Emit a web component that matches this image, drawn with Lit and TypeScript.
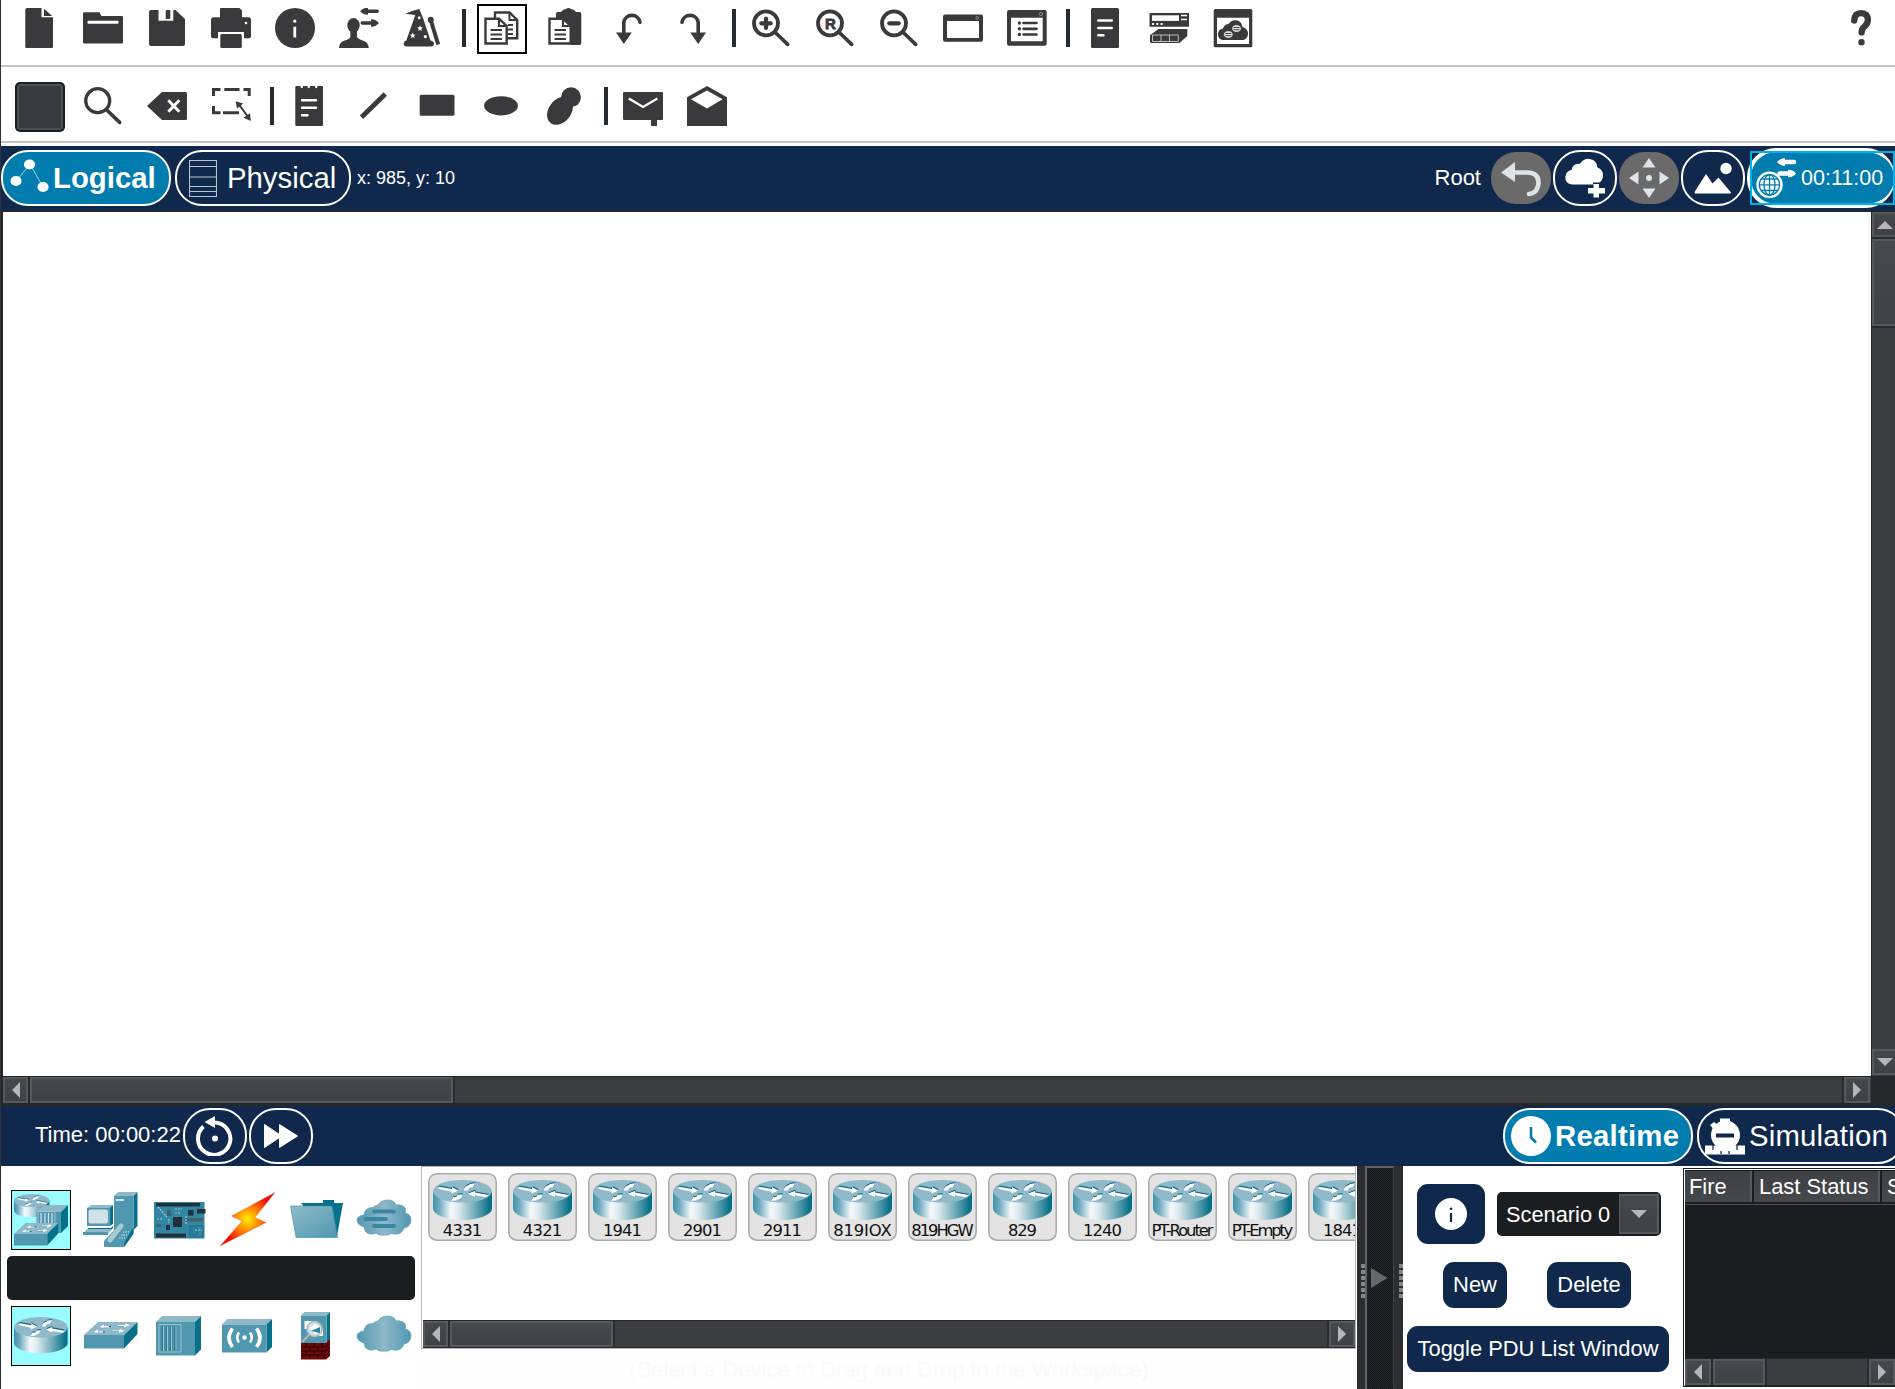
import { LitElement, html, svg, css } from "lit";
import { customElement } from "lit/decorators.js";

const K = "#3a3a3c";

const copyFront = svg`<path d="M4.5 10.7H18L25.7 18V35.5H4.5Z" fill="#fff" stroke=${K} stroke-width="2.4"/><path d="M18 10.7V18H25.7" fill="none" stroke=${K} stroke-width="2.2"/><path d="M9.5 22H21M9.5 26.5H21M9.5 31H21" stroke=${K} stroke-width="2"/>`;
const lens = (cx: number, cy: number, inner: unknown, w = 3.8) => svg`<circle cx=${cx} cy=${cy} r="12" fill="none" stroke=${K} stroke-width=${w}/><path d="M23.5 23.7L36.7 36.4" stroke=${K} stroke-width="3.6" stroke-linecap="round"/>${inner}`;

const icons: Record<string, unknown> = {
  file: svg`<path d="M8 0H22.5V9.3H34V39Q34 40 33 40H7.5Q6.3 40 6.3 39V1.5Q6.3 0 8 0Z"/><path d="M25 .8L33.2 8H25Z"/>`,
  folder: svg`<path d="M1 4.3H16.5L18.5 8H39Q40 8 40 9V34.5Q40 35.6 39 35.6H1Q0 35.6 0 34.5V5.3Q0 4.3 1 4.3Z"/><rect x="4.5" y="12.7" width="31" height="3" rx="1" fill="#fff"/>`,
  save: svg`<path d="M4 2H28.5L38 11V36Q38 38 36 38H4Q2 38 2 36V4Q2 2 4 2Z"/><path d="M11.5 1.5V12.7H26.3V1.5Z" fill="#fff"/><rect x="18.7" y="2" width="4.6" height="9" rx="1"/>`,
  print: svg`<path d="M10 0H28.5L31 2.5V9.3H37.5Q40 9.3 40 11.5V28.5Q40 30.3 38 30.3H33V24H7V30.3H2Q0 30.3 0 28.5V11.5Q0 9.3 2.5 9.3H9V1Q9 0 10 0Z"/><rect x="9.3" y="26" width="21.5" height="14" rx="1.5"/><circle cx="35" cy="15" r="1.3" fill="#fff"/>`,
  info: svg`<circle cx="20" cy="20" r="20"/><circle cx="19.8" cy="13.2" r="1.6" fill="#fff"/><path d="M19.8 18.7V29.5" stroke="#fff" stroke-width="2.8"/>`,
  user: svg`<ellipse cx="14.5" cy="17.3" rx="6.2" ry="7.2"/><path d="M11.3 22H18V29Q19 31 25 33Q29.3 34.5 29.7 40H0Q.2 34.5 5 32.8Q11 31 11.3 29Z"/><path d="M24 3.3H38.2M23.3 15H37" stroke=${K} stroke-width="3.6" stroke-linecap="round"/><path d="M21 3.3Q25 -1 29 0V6.600Q25 7.5 21 3.300ZM40 15Q36 10.500 32 11.500V18.500Q36 19.500 40 15Z"/>`,
  wizard: svg`<path d="M2.3 5.8Q9 2.5 16.3 1L20 10L27.5 32.5Q31.5 33.5 31 36Q30.8 38.4 28.5 38.4H3.5Q.7 38.4 .7 35.5Q.8 33 3.3 32.5L12.3 7Z"/><path d="M27.7 12L35.2 36.5" stroke=${K} stroke-width="4"/><circle cx="27.7" cy="11.8" r="3"/><g fill="#fff"><path d="M17 17.3l.8 2 2.2.1-1.7 1.4.6 2.1-1.9-1.2-1.8 1.2.6-2.1-1.8-1.4 2.2-.1z"/><path d="M9.7 24.6l.8 2 2.2.1-1.7 1.4.6 2.1-1.9-1.2-1.8 1.2.6-2.1-1.8-1.4 2.2-.1z"/><circle cx="22.4" cy="28.6" r="1.6"/><circle cx="16.2" cy="9.8" r="1.5"/></g>`,
  copy: svg`<path d="M14 15V4.5H28.5L36.2 12V30.3H24" fill="#fff" stroke=${K} stroke-width="2.4"/><path d="M28.5 4.5V12H36.2" fill="none" stroke=${K} stroke-width="2"/><path d="M27 17H32M27 21.5H32M27 26H32" stroke=${K} stroke-width="2"/>${copyFront}`,
  paste: svg`<path d="M12.5 4H16Q18 1 21 1Q23.5-.8 26 1Q29 1 31 4H34.5Q36.3 4 36.3 6V35Q36.3 37 34.5 37H26V19L18 12L11 11V6Q11 4 12.5 4Z"/>${copyFront}`,
  undo: svg`<path d="M14.8 25V14.3A8.2 8.2 0 0 1 31 14.3" fill="none" stroke=${K} stroke-width="3.6" stroke-linecap="round"/><path d="M7 24.4H22.8L14.8 36Z"/>`,
  redo: svg`<path d="M25.2 25V14.3A8.2 8.2 0 0 0 9 14.3" fill="none" stroke=${K} stroke-width="3.6" stroke-linecap="round"/><path d="M33 24.4H17.2L25.2 36Z"/>`,
  zoomIn: lens(15, 15.3, svg`<path d="M10.3 15.3H19.7M15 10.600V20" stroke=${K} stroke-width="4.200" stroke-linecap="round"/>`),
  zoomReset: lens(15, 15.3, svg`<text x="15.3" y="21" text-anchor="middle" class="rtext">R</text>`),
  zoomOut: lens(15, 15.3, svg`<path d="M10.300 15.3H19.700" stroke=${K} stroke-width="4.200" stroke-linecap="round"/>`),
  window: svg`<path fill-rule="evenodd" d="M2 6.5H38Q40 6.5 40 8.5V31.7Q40 33.7 38 33.7H2Q0 33.7 0 31.7V8.5Q0 6.5 2 6.5ZM4 13V30H36V13Z"/><circle cx="34.2" cy="9.8" r="1.4" fill="none" stroke="#aaa" stroke-width=".7"/>`,
  list: svg`<path fill-rule="evenodd" d="M2 1.9H37.7Q39.7 1.9 39.7 3.9V35.7Q39.7 37.7 37.7 37.7H2Q0 37.7 0 35.7V3.9Q0 1.9 2 1.9ZM4 9.8V33.3H35.7V9.8Z"/><circle cx="34" cy="6" r="1.6" fill="none" stroke="#aaa" stroke-width=".7"/><path d="M16.5 15H29.5M16.5 20.8H29.5M16.5 26.5H29.5" stroke=${K} stroke-width="2.7" stroke-linecap="round"/><circle cx="12.4" cy="15" r="1.7"/><circle cx="12.4" cy="20.8" r="1.7"/><circle cx="12.4" cy="26.5" r="1.7"/>`,
  doc: svg`<rect x="6" width="28" height="40" rx="1.5"/><path d="M13.2 12.5H26.8M13.2 20H26.8M13.2 27.3H18.5" stroke="#fff" stroke-width="2.4" stroke-linecap="round"/>`,
  server: svg`<path d="M.5 5H40V18.8H.5Z"/><path d="M3 7.3H30V12.9H3Z" fill="#fff"/><path d="M32 7.6H38M32 11.6H38" stroke="#fff" stroke-width="1.5"/><path d="M3 15.9h2M7.3 15.9h2M11.6 15.9h2" stroke="#fff" stroke-width="2"/><path d="M9.5 21H38.3V28L30.5 35H2L1 34V27.2Z"/><path d="M3.5 27H29.3V33.5H3.5ZM12 27V33.5M20.5 27V33.5" fill="none" stroke="#ccc" stroke-width=".9"/>`,
  cloudWin: svg`<path fill-rule="evenodd" d="M2.2 1H37.8Q39.3 1 39.3 2.5V37.8Q39.3 39.3 37.8 39.3H2.2Q.7 39.3 .7 37.8V2.5Q.7 1 2.2 1ZM4 9.7V36H36V9.7Z"/><path d="M9.5 32Q4.8 31 4.9 26Q5.2 21.3 10 20.5Q11.5 16 15.5 16Q18 12 22.5 12.2Q28.5 12.5 29.5 19Q35 20.5 35 26Q34.8 30.5 30.5 32Z"/><g fill="#ddd" stroke="#ddd"><ellipse cx="23.5" cy="20.5" rx="4" ry="3"/><ellipse cx="15.3" cy="26.5" rx="4" ry="3"/></g><path d="M20.5 19.5h6M20.5 21.7h6M12.3 25.5h6M12.3 27.7h6" stroke=${K} stroke-width=".9"/>`,
  help: svg`<path d="M13.2 12.5Q13.6 5.2 20 5.2Q26.8 5.3 26.9 12Q26.7 16 23.5 18.4Q20.6 20.5 20.6 24.4" fill="none" stroke=${K} stroke-width="6.3" stroke-linecap="round"/><circle cx="20.5" cy="34.2" r="3.2"/>`,
  search: lens(14.7, 14.7, "", 3.3),
  del: svg`<path d="M0 20L15 6H38.5Q40 6 40 7.5V32.5Q40 34 38.5 34H15Z"/><path d="M21.3 14.3L32.3 25.7M32.3 14.3L21.3 25.7" stroke="#fff" stroke-width="2.9"/>`,
  select: svg`<g fill="none" stroke=${K} stroke-width="3"><path d="M2.5 10V3.6H9.5M13.3 3.6H28.5M32.5 3.6H38.2V10M2.5 20V26.8H9.5M12 26.8H28"/><path d="M28 18.7L37.5 31.5" stroke-width="2"/></g><path d="M24.6 15.3L32.3 17.5L26 22.5ZM39.8 35L39 27.2L32.6 31.7Z"/>`,
  note: svg`<path d="M7.3 0H11.500Q11.500 2.3 12.700 2.3Q14 2.3 14 0H18.500Q18.500 2.3 19.7 2.3Q21 2.3 21 0H26Q26 2.3 27.3 2.3Q28.500 2.3 28.500 0H33Q34 0 34 1V39Q34 40 33 40H7.3Q6.3 40 6.3 39V1Q6.3 0 7.3 0Z"/><path d="M13 14.2H27M13 21.7H27M13 29.2H18.5" stroke="#fff" stroke-width="2.4" stroke-linecap="round"/>`,
  line: svg`<path d="M8.5 31.3L32.3 8" stroke=${K} stroke-width="4.8"/>`,
  rect: svg`<rect x="2.7" y="8.8" width="34.8" height="21" rx="1.5"/>`,
  ellipse: svg`<ellipse cx="20" cy="19.8" rx="16.9" ry="9.6"/>`,
  blob: svg`<circle cx="26" cy="11.2" r="9.9"/><ellipse cx="15" cy="24.8" rx="15.4" ry="11.2" transform="rotate(-52 15 24.8)"/>`,
  mail: svg`<path d="M1.2 6H38.8Q40 6 40 7.2V32.8Q40 34 38.8 34H34V40H28V34H1.2Q0 34 0 32.8V7.2Q0 6 1.2 6Z"/><path d="M5.8 12.5L20 21L34.4 12.5" fill="none" stroke="#fff" stroke-width="2.3"/>`,
  openMail: svg`<path d="M0 11.2L20 0L40 11.2V40H0Z"/><path d="M4 13.3L20 4.4L35.5 13.3L20 22.6Z" fill="#fff"/>`,
};

const ic = (n: string) => html`<svg class="ic" viewBox="0 0 40 40" width="40" height="40" fill=${K}>${icons[n]}</svg>`;

const routerArrows = svg`<path d="M4.500 8.800L6.500 6.800L19 9V7.200L25.500 10.500L18.500 13.600V11.800Z"/><path d="M31 10.500Q31 5.500 36.500 5L36 4.200L41.800 3.300L39 8L38.300 7.200Q35.200 7.500 35 10.500Z"/><path d="M55.500 15L53.500 17.300L42 15.300V17L35 13.600L42 11V12.600Z"/><path d="M18 20.800L20.500 16.800L21.300 17.600Q24.500 17 24.800 14.800L29.500 14.500Q28.500 19 23.200 19.800L24 20.600Z"/>`;
/* router cylinder with arrows on its top face, in a 59x40 box */
const routerBody = (id: string) => svg`
  <defs><linearGradient id=${id}><stop offset="0" stop-color="#3f92ad"/><stop offset=".1" stop-color="#6aa9bf"/><stop offset=".3" stop-color="#f4f9fa"/><stop offset=".42" stop-color="#dfecef"/><stop offset=".75" stop-color="#62a2b3"/><stop offset=".95" stop-color="#0b728c"/></linearGradient></defs>
  <path d="M0 11.5V28.5A29.5 11.3 0 0 0 59 28.5V11.5Z" fill="url(#${id})"/>
  <ellipse cx="29.5" cy="11.3" rx="29.5" ry="11.3" fill="#8fb8c9"/>
  <g fill="#0b6a84" transform="translate(.3 -1.2)">${routerArrows}</g><g fill="#fff">${routerArrows}</g>`;

const box3d = (x: number, y: number, w: number, h: number, d: number) => svg`
  <path d="M${x} ${y + d}L${x + d} ${y}H${x + w}L${x + w - d} ${y + d}Z" fill="#8fb8c9"/>
  <path d="M${x + w - d} ${y + d}L${x + w} ${y}V${y + h - d}L${x + w - d} ${y + h}Z" fill="#07708a"/>
  <path d="M${x} ${y + d}H${x + w - d}V${y + h}H${x}Z" fill="#5097b0"/>`;

const slab = svg`<path d="M0 13L14 0H53.5L40 13Z" fill="#8fb8c9"/><path d="M40 13L53.5 0V12L40 26.5Z" fill="#07708a"/><path d="M0 13H40V26.5H0Z" fill="#5097b0"/>
  <g fill="none" stroke="#0b6a84" stroke-width="1.2"><path d="M18 4.5H27M34 4H43M12 10H21M28 9.5H37"/></g><g fill="#fff"><path d="M20 2.5L15.5 5L19.5 6V5.2H25V4H20ZM42 1.5L46 3.2L40 5.5V4.2H34V3H41ZM14 7.5L9.5 10L13.5 11V10.4H19V9.2H14ZM36 7L40.5 8.8L35 11V9.6H28V8.5H35Z"/></g>`;
const cloudShape = svg`<path d="M7 15Q8 7 16 7.5Q18 5 21 5Q24 0 31 0Q37 0 39 5Q46 4 48.5 9Q48.500 12 48 13Q54 14 54 20Q53.500 27 47 28Q45 35 37 34L34 33.500Q31 36 27 35Q22 36 19 33Q12 36 8 31Q8 29 7 27Q0 25 0 20Q0 16 7 15Z" fill="url(#cl)" stroke="#6ba4b8" stroke-width=".8"/>`;
const clGrad = svg`<defs><linearGradient id="cl"><stop offset="0" stop-color="#5097b0"/><stop offset=".5" stop-color="#8fb8c9"/><stop offset="1" stop-color="#5097b0"/></linearGradient></defs>`;

/* every device picture uses a 60x60 box */
const devices: Record<string, unknown> = {
  network: svg`<g transform="translate(3 4) scale(.6 .58)">${routerBody("rg1")}</g>${box3d(25.5, 15, 31.5, 28, 7)}<path d="M27 21.500H44V36H27Z" fill="none" stroke="#9cc2d0"/><path d="M30 23V36M34 23V36M37.500 23V36M41 23V36" stroke="#cfe2e9" stroke-width="1.200"/><g transform="translate(3 33) scale(.83 .85)">${slab}</g>`,
  pc: svg`${box3d(33, 2, 23.5, 38, 4)}<path d="M34.500 9H43V11H34.500Z" fill="#cfe2e9"/><path d="M6 18L10 15H32L28.500 18Z" fill="#8fb8c9"/><path d="M28.500 18L32 15V34L28.500 36Z" fill="#07708a"/><path d="M6 18H28.500V36H6Z" fill="#5097b0"/><rect x="7.500" y="19.500" width="19.500" height="14" rx="2" fill="#cfe2e9"/><path d="M7 38H30L32 36V38L29 41H8Z" fill="#07708a"/><path d="M6 39L2 44H27L31 39Z" fill="#8fb8c9"/><path d="M2 42H27V45H2Z" fill="#5097b0"/><path d="M23 51L36 37H52.500V43L43 57H23Z" fill="#5097b0"/><path d="M43 53L52.500 37V44L43 57Z" fill="#07708a"/><path d="M29 50L40 36" stroke="#a9c9d5" stroke-width="5" stroke-linecap="round"/><path d="M38 48H44M40 45H46M42 42H48" stroke="#cfe2e9" stroke-dasharray="1.500 1"/>`,
  board: svg`<path d="M4 12H54.500V48.500H4Z" fill="#3186a4"/><path d="M6 13H50V16.500H6ZM6 43.500H36V47.500H6ZM23 27H32V37H23ZM38 20H43.500V25.500H38ZM16 35H20V40H16ZM47 19H55.500V23.500H47Z" fill="#22303a"/><path d="M35 28H53V31.500H35ZM17 20H21V26H17ZM6 34H11V37H6Z" fill="#45606c"/><path d="M40 36H53V47H40ZM42 38H47V45H42Z" fill="none" stroke="#1b6a86"/><path d="M8 17L17 27M25 19H32M25 23H30M7 29H13M19 29V33M36 26V35M45 40H52" stroke="#9cc8d8" stroke-width="1.200" stroke-dasharray="2 1"/>`,
  bolt: svg`<defs><radialGradient id="bo" cx=".5" cy=".5" r=".5"><stop offset="0" stop-color="#ffee00"/><stop offset=".5" stop-color="#ff7a00"/><stop offset="1" stop-color="#f00808"/></radialGradient></defs><path d="M58 2.500L14.500 26L25 31L3 56L49 32.500L38 27.500Z" fill="url(#bo)" stroke="#e86a60" stroke-width=".4"/>`,
  folder: svg`<path d="M15 13H37V10H48V13H57L51 46H40Z" fill="#07708a"/><defs><linearGradient id="fo" x2="1" y2="1"><stop offset="0" stop-color="#8fbccb"/><stop offset="1" stop-color="#4f98b0"/></linearGradient></defs><path d="M4.500 16H46L51.500 47.500H10Z" fill="url(#fo)" stroke="#3c8ca6" stroke-width=".6"/>`,
  multi: svg`${clGrad}<g transform="translate(3 10)">${cloudShape}<path d="M17 11.500H37M8.500 19H29M17 26H37" stroke="#3a86a0" stroke-width="4" stroke-linecap="round"/></g>`,
  router: svg`<g transform="translate(3 11) scale(.91 .91)">${routerBody("rg2")}</g>`,
  switch: svg`<g transform="translate(3 16)">${slab}</g>`,
  hub: svg`${box3d(6, 10, 45, 39.5, 6)}<path d="M9 18.500H31V46H9Z" fill="none" stroke="#9cc2d0"/><path d="M13 20V45M17 20V45M21 20V45M25.500 20V45" stroke="#28748d" stroke-width="2.600"/><path d="M13.500 20V45M17.500 20V45M21.500 20V45M26 20V45" stroke="#9cc2d0" stroke-width="1.200"/>`,
  wireless: svg`${box3d(5, 13, 50, 33.5, 5.5)}<circle cx="27.500" cy="31.500" r="2.200" fill="#fff"/><g fill="none" stroke="#fff" stroke-width="2.600"><path d="M22 26.500Q18.500 31.500 22 36.500M33 26.500Q36.500 31.500 33 36.500"/><path d="M15.500 22.500Q8.500 31.500 15.500 41M39.500 22.500Q46.500 31.500 39.500 41" stroke-width="3.600"/></g>`,
  security: svg`${box3d(15, 6, 29, 35, 3.5)}<path d="M15 37H40L44 33V50L40 53.500H15Z" fill="#6b0808"/><path d="M15 41H40L44 37M15 45H40L44 41M15 49H40L44 45M20 37V41M28 37V41M36 37V41M24 41V45M32 41V45M20 45V49M28 45V49M36 45V49M24 49V53M32 49V53" fill="none" stroke="#2d0303"/><path d="M18.500 15H29V23H18.500ZM25 24H37V30H25Z" fill="#fff"/><circle cx="28.500" cy="23" r="7.500" fill="#cfe2e9" stroke="#b8b8b8" stroke-width="1.600"/><path d="M23 22L29 18L35 22L29 28Z" fill="#fff"/><path d="M34 21L25 25L34 27Z" fill="#2f86a2"/><path d="M23 29L16 36" stroke="#bdb3ae" stroke-width="2.200"/>`,
  wan: svg`<g transform="translate(3 10)">${cloudShape}</g>`,
};
const dev = (n: string, sel = false) => html`<div class=${sel ? "dev sel" : "dev"}><svg viewBox="0 0 60 60" width="60" height="60">${devices[n]}</svg></div>`;

const models: [string, number][] = [["4331", 39.5], ["4321", 39.5], ["1941", 39], ["2901", 39], ["2911", 39], ["819IOX", 58.5], ["819HGW", 62.5], ["829", 29], ["1240", 39], ["PT-Router", 62], ["PT-Empty", 61.5], ["1841", 39]];

const tri = (dir: string) => {
  const d: Record<string, string> = { left: "M16 4V20L8 12Z", right: "M8 4V20L16 12Z", up: "M4 16H20L12 8Z", down: "M4 8H20L12 16Z" };
  return html`<svg width="24" height="24" viewBox="0 0 24 24"><path d=${d[dir]} fill="#b4b6b8"/></svg>`;
};

@customElement("app-root")
export class AppRoot extends LitElement {
  static styles = css`
    :host { display: block; width: 1895px; height: 1389px; overflow: hidden; background: #fff; color: #fff; font: 22px "Liberation Sans", Arial, sans-serif; }
    * { box-sizing: border-box; }
    svg { display: block; flex: none; }
    .app { display: flex; flex-direction: column; height: 1389px; border-left: 1px solid #2f323b; white-space: nowrap; }
    .tools { display: flex; padding-left: 6px; border-bottom: 2px solid #c3c3c3; flex: none; }
    .t1 { height: 67px; } .t2 { height: 76px; margin-bottom: 3px; }
    .cell { width: 64px; display: flex; justify-content: center; }
    .t1 .cell { height: 56px; padding-top: 8px; } .t2 .cell { padding-top: 19px; }
    .t1 .cell.copy { padding-top: 4px; }
    .copy span { width: 50px; height: 50px; margin-left: 2px; border: 2px solid #000; padding: 2px 0 0 2px; }
    .t2 .cell.picked { padding: 15px 0 0 2px; }
    .picked span { width: 50px; height: 50px; border: 2px solid #1c1f22; border-radius: 5px; background: #373a3f; box-shadow: inset 0 0 0 2px #4a4f53; padding: 3px; }
    .picked svg { opacity: .35; }
    .sep { width: 4px; height: 38px; margin: 9px 3px 0 7px; background: #262c31; }
    .t2 .sep { margin-top: 20px; }
    .grow { flex: 1; }
    .help { margin-right: 2px; }
    .rtext { font: bold 15px "Liberation Sans", sans-serif; stroke: #3a3a3c; stroke-width: .8px; }
    .bar { background: #0f284b; display: flex; flex: none; align-items: center; overflow: hidden; }
    .top { height: 64px; }
    .pill { flex: none; height: 56px; border: 2px solid #fff; border-radius: 27px; display: flex; align-items: center; font-size: 29.33px; }
    .on { background: #007cae; font-weight: bold; }
    .logical { width: 170px; padding-left: 7px; gap: 3px; }
    .physical { width: 176px; margin-left: 4px; padding-left: 12px; gap: 10px; }
    .coords { font-size: 18px; margin-left: 6px; }
    .root { margin-right: 10px; }
    .round { width: 64px; justify-content: center; margin-right: 2px; }
    .gray { width: 60px; height: 52px; background: #6a6a6a; border: 0; border-radius: 25px; margin-right: 2px; }
    .timer { position: relative; width: 148px; height: 60px; border-width: 4px 1px 4px 4px; border-radius: 29px; font-size: 21.5px; font-weight: normal; padding-left: 5px; gap: 5px; }
    .timer::after { content: ""; position: absolute; left: -1px; top: -1px; right: -1px; bottom: -1px; border: 2px solid #00b3e6; }
    .work { display: grid; grid-template-columns: 1868px 24px; grid-template-rows: 864px 28px; height: 896px; border-left: 2px solid #25282b; border-top: 2px solid #25282b; background: #25282b; flex: none; }
    .canvas { background: #fff; }
    .sb { display: flex; background: #3b3d41; border: 1px solid #25282b; border-left: 0; border-right: 0; }
    .sb.v { flex-direction: column; border: 0 solid #25282b; border-left-width: 1px; }
    .btn, .thumb { flex: none; background: linear-gradient(#45494d, #3e4145); border: 2px solid #55595d; display: flex; align-items: center; justify-content: center; overflow: hidden; }
    .btn { width: 26px; }
    .thumb { box-shadow: 2px 0 #292c2f, -2px 0 #292c2f; }
    .v .btn { width: 26px; height: 25px; } .v .thumb { width: 26px; height: 87px; box-shadow: 0 2px #292c2f, 0 -2px #292c2f; margin-top: 2px; }
    .v .btn:last-child { height: 26px; margin-bottom: 1px; }
    .h1 .thumb { width: 423px; margin-left: 2px; }
    .edge { box-shadow: -2px 0 #292c2f; margin-right: 1px; }
    .h2 .edge, .h3 .edge { margin-right: 0; }
    .h1 .btn:first-child, .h2 .btn:first-child { width: 25px; }
    .mid { height: 60px; padding-left: 34px; }
    .time { width: 148px; padding-bottom: 2px; }
    .realtime { width: 190px; padding-left: 6px; gap: 4px; margin-right: 4px; letter-spacing: .25px; }
    .sim { width: 208px; padding-left: 6px; gap: 4px; margin-right: -10px; letter-spacing: .2px; }
    .bottom { display: flex; flex: 1; min-height: 0; color: #fff; }
    .kinds { width: 420px; flex: none; padding: 24px 0 0 6px; }
    .devs { display: grid; grid-template-columns: 70px 69px 67px 68.5px 68.5px 60px; padding-left: 4px; height: 60px; }
    .dev { width: 60px; height: 60px; }
    .sel { background: #99fcff; outline: 1px solid #000; outline-offset: -1px; }
    .name { width: 408px; height: 44px; margin: 6px 0; background: #1b1e21; border-radius: 5px; }
    .models { width: 936px; flex: none; display: flex; flex-direction: column; }
    .lst { height: 183px; border: 1px solid #b9b9b9; width: 935px; display: flex; flex-direction: column; padding-left: 1px; }
    .cards { display: flex; gap: 11px; padding: 6px 0 0 5px; height: 153px; overflow: hidden; }
    .card { width: 69px; height: 68px; flex: none; }
    .card text { font: 16.4px "DejaVu Sans", Verdana, sans-serif; fill: #111; }
    .h2 { height: 28px; width: 932px; }
    .h2 .thumb { width: 163px; margin-left: 2px; }
    .hint { text-align: center; color: #fafafa; padding-top: 8px; flex: 1; background: #fefefe; }
    .split { width: 46px; flex: none; background: #2c2e33; display: flex; align-items: stretch; }
    .split .face { width: 30px; margin: 0 5px 0 0; border: 2px solid #606367; border-right: 1px solid #3d4043; border-bottom: 0; background: repeating-conic-gradient(#15181a 0 25%, #25282b 0 50%) 0 0/2px 2px; padding: 100px 0 0 4px; }
    .grip { width: 4px; height: 34px; margin: 98px 0 0 4px; background: repeating-linear-gradient(#86888a 0 4px, #2c2e33 4px 6px); }
    .face + .grip { margin-left: 0; }
    .pdu { width: 280px; flex: none; padding: 18px 0 0 4px; display: flex; flex-direction: column; align-items: flex-start; }
    .row { display: flex; align-items: center; }
    .b { background: #0f284b; border-radius: 11px; height: 46px; display: flex; align-items: center; justify-content: center; font-size: 21.9px; }
    .i { width: 68px; height: 60px; margin: 0 12px 0 10px; }
    .combo { width: 164px; height: 44px; background: #1b1e20; border: 2px solid #1b1e20; border-radius: 5px; display: flex; align-items: stretch; justify-content: space-between; line-height: 41px; padding-left: 7px; font-size: 21.8px; }
    .combo .btn { width: 40px; border-left-width: 1px; }
    .acts { margin: 18px 0 18px 36px; gap: 40px; }
    .new { width: 64px; } .delete { width: 84px; } .toggle { width: 262px; }
    .table { flex: none; width: 220px; height: 219px; margin-top: 2px; border: 1px solid #1b1e20; background: #1b1e20; box-shadow: inset 1px 1px #fff; padding: 2px 0 0 1px; display: flex; flex-direction: column; }
    .head { display: flex; height: 34px; border-bottom: 1px solid #4a4e52; line-height: 32px; font-size: 21.9px; }
    .head div { flex: none; height: 31px; background: linear-gradient(#3d4145, #45484c); border-right: 2px solid #565a5e; padding-left: 5px; margin-right: 2px; }
    .fire { width: 67px; } .head .fire { padding-left: 4px; } .last { width: 126px; } .s { width: 30px; }
    .body { flex: 1; }
    .h3 { height: 28px; width: 210px; }
    .h3 .thumb { width: 52px; margin-left: 2px; }
    .clip { overflow: hidden; flex: 1; }
  `;

  render() {
    const cells = (...n: string[]) => n.map((x) => html`<div class="cell">${ic(x)}</div>`);
    const sep = html`<div class="sep"></div>`;
    return html`<div class="app">
      <div class="tools t1">
        ${cells("file", "folder", "save", "print", "info", "user", "wizard")}${sep}
        <div class="cell copy"><span>${ic("copy")}</span></div>
        ${cells("paste", "undo", "redo")}${sep}
        ${cells("zoomIn", "zoomReset", "zoomOut", "window", "list")}${sep}
        ${cells("doc", "server", "cloudWin")}
        <div class="grow"></div><div class="cell help">${ic("help")}</div>
      </div>
      <div class="tools t2">
        <div class="cell picked"><span>${ic("select")}</span></div>
        ${cells("search", "del", "select")}${sep}${cells("note", "line", "rect", "ellipse", "blob")}${sep}${cells("mail", "openMail")}
      </div>
      <div class="bar top">
        <div class="pill on logical"><svg width="40" height="40" viewBox="0 0 40 40" fill="#fff"><path d="M6.500 23L20 6L33 29" fill="none" stroke="#9fd0e3" stroke-width="1"/><ellipse cx="19.500" cy="6.500" rx="5.600" ry="5"/><ellipse cx="6" cy="23" rx="5.600" ry="5"/><ellipse cx="33" cy="29" rx="5.600" ry="5"/></svg>Logical</div>
        <div class="pill physical"><svg width="28" height="37" viewBox="0 0 28 37"><path d="M.5.500H27.500V36.500H.500ZM.500 6.500H27.500M.500 17H27.500M.500 26.500H27.500M.500 31.500H27.500" fill="none" stroke="#b9c3d1" stroke-width="1.100"/></svg>Physical</div>
        <div class="coords">x: 985, y: 10</div>
        <div class="grow"></div>
        <div class="root">Root</div>
        <div class="pill gray round"><svg width="40" height="40" viewBox="0 0 40 40"><path d="M12 14.500H27.500Q37.500 15.500 37.500 24.500Q37 35 28 36" fill="none" stroke="#dde3e8" stroke-width="4.600" stroke-linecap="round"/><path d="M0 14.500L14 4V24Z" fill="#dde3e8"/></svg></div>
        <div class="pill round"><svg width="40" height="40" viewBox="0 0 40 40" fill="#fff"><path d="M7 26.500Q0 25.500 .3 19Q1 13 6.500 12Q8 5 15 5.800Q19 0 25 1Q32 2.500 32.500 9.500Q38 11.500 38 17.500Q38 22 34.500 24.500H28V26.500Z"/><path d="M28.500 26H34V30H40V35.500H34V39.500H28.500V35.500H23V30H28.500Z"/></svg></div>
        <div class="pill gray round"><svg width="40" height="40" viewBox="0 0 40 40" fill="#dde3e8"><circle cx="20" cy="20" r="3"/><path d="M20 0L26.500 9.500H13.500ZM20 40L26.500 30.500H13.500ZM0 20L9.500 13.500V26.500ZM40 20L30.500 13.500V26.500Z"/></svg></div>
        <div class="pill round"><svg width="40" height="40" viewBox="0 0 40 40" fill="#fff"><circle cx="33" cy="10.500" r="5.700"/><path d="M1.500 34L13 16L19.500 25.500L25.500 19.500L38 34.500L37.500 35.500H2Z"/></svg></div>
        <div class="pill on timer"><svg width="40" height="40" viewBox="0 0 40 40" fill="#fff"><path d="M25 4H38M23.500 15.500H37" stroke="#fff" stroke-width="4.400" stroke-linecap="round"/><path d="M21 4Q25 -.500 29 .300V7.800Q25 8.500 21 4ZM40 15.500Q36 11 32 12V19.200Q36 20 40 15.500Z"/><circle cx="13.500" cy="26.800" r="13.200"/><g fill="none" stroke="#007cae" stroke-width="1.300"><ellipse cx="13.500" cy="26.800" rx="5.500" ry="10.300"/><path d="M13.500 16.500V37M3.500 26.800H23.500M5 21H22M5 32.500H22"/><circle cx="13.500" cy="26.800" r="10.200"/></g></svg>00:11:00</div>
      </div>
      <div class="work">
        <div class="canvas"></div>
        <div class="sb v"><div class="btn">${tri("up")}</div><div class="thumb"></div><div class="grow"></div><div class="btn">${tri("down")}</div></div>
        <div class="sb h1"><div class="btn">${tri("left")}</div><div class="thumb"></div><div class="grow"></div><div class="btn edge">${tri("right")}</div></div>
      </div>
      <div class="bar mid">
        <div class="time">Time: 00:00:22</div>
        <div class="pill round"><svg width="40" height="40" viewBox="0 0 40 40"><path d="M8.500 10.500A16.200 16.200 0 1 0 20 6.500" fill="none" stroke="#fff" stroke-width="4"/><path d="M9.500 6L20 0V12Z" fill="#fff"/><circle cx="20" cy="22.500" r="3" fill="#fff"/></svg></div>
        <div class="pill round"><svg width="40" height="40" viewBox="0 0 40 40" fill="#fff" stroke="#fff" stroke-linejoin="round"><path d="M3.500 8.500L18.500 18.500V8.500L36.500 20L18.500 31.500V21.500L3.500 31.500Z"/></svg></div>
        <div class="grow"></div>
        <div class="pill on realtime"><svg width="40" height="40" viewBox="0 0 40 40"><circle cx="20" cy="20" r="20" fill="#fff"/><path d="M20 11V21.500L25 26.500" fill="none" stroke="#007cae" stroke-width="2.600"/></svg>Realtime</div>
        <div class="pill sim"><svg width="40" height="40" viewBox="0 0 40 40" fill="#fff"><path d="M15 2.500H25V6H15ZM0 29.500H40V38.500H0ZM5 9L9 6L13 9L9 14Z"/><circle cx="20.500" cy="19" r="14.500"/><path d="M11 17.500H29V21.500H11Z" fill="#0f284b"/><path d="M8 29V34M32 29V34M16 35V38M24 35V38" stroke="#0f284b" stroke-width="1.200"/></svg>Simulation</div>
      </div>
      <div class="bottom">
        <div class="kinds">
          <div class="devs">${dev("network", true)}${dev("pc")}${dev("board")}${dev("bolt")}${dev("folder")}${dev("multi")}</div>
          <div class="name"></div>
          <div class="devs">${dev("router", true)}${dev("switch")}${dev("hub")}${dev("wireless")}${dev("security")}${dev("wan")}</div>
        </div>
        <div class="models">
          <div class="lst">
            <div class="cards">${models.map(([m, w], i) => html`<svg class="card" width="69" height="68" viewBox="0 0 69 68"><rect x=".8" y=".8" width="67.400" height="66.400" rx="8" fill="#e4e4e4" stroke="#a9a9a9" stroke-width="1.500"/><g transform="translate(5 7)">${routerBody("c" + i)}</g><text x=${34.5 - w / 2} y="62.500" textLength=${w}>${m}</text></svg>`)}</div>
            <div class="sb h2"><div class="btn">${tri("left")}</div><div class="thumb"></div><div class="grow"></div><div class="btn edge">${tri("right")}</div></div>
          </div>
          <div class="hint">(Select a Device to Drag and Drop to the Workspace)</div>
        </div>
        <div class="split"><div class="grip"></div><div class="face"><svg width="17" height="20" viewBox="0 0 17 20"><path d="M0 0V20L16.500 10Z" fill="#66686a"/></svg></div><div class="grip"></div></div>
        <div class="pdu">
          <div class="row"><div class="b i"><svg width="32" height="32" viewBox="0 0 32 32"><circle cx="16" cy="16" r="16" fill="#fff"/><circle cx="16" cy="10.700" r="1.300" fill="#0f284b"/><path d="M16 15V24" stroke="#0f284b" stroke-width="2.200"/></svg></div>
            <div class="combo">Scenario 0<div class="btn">${tri("down")}</div></div></div>
          <div class="row acts"><div class="b new">New</div><div class="b delete">Delete</div></div>
          <div class="b toggle">Toggle PDU List Window</div>
        </div>
        <div class="clip"><div class="table">
          <div class="head"><div class="fire">Fire</div><div class="last">Last Status</div><div class="s">S</div></div>
          <div class="body"></div>
          <div class="sb h3"><div class="btn">${tri("left")}</div><div class="thumb"></div><div class="grow"></div><div class="btn edge">${tri("right")}</div></div>
        </div></div>
      </div>
    </div>`;
  }
}
